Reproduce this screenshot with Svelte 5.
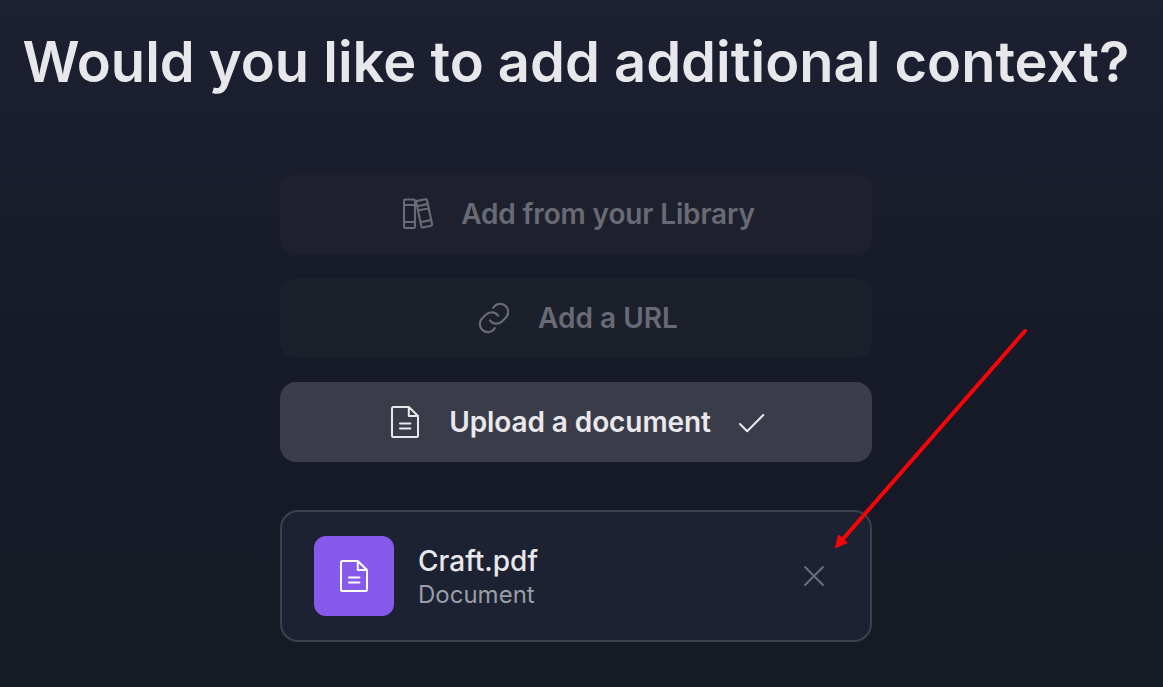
<script>
  const options = [
    { label: 'Add from your Library', icon: 'books', selected: false },
    { label: 'Add a URL', icon: 'link', selected: false },
    { label: 'Upload a document', icon: 'file', selected: true }
  ];
</script>

{#snippet fileIcon()}
  <svg class="icon" width="40" height="40" viewBox="0 0 40 40">
    <path d="M8.500 5h15.300l9.200 9v19.500a1.500 1.500 0 0 1-1.500 1.500h-23A1.500 1.500 0 0 1 7 33.500V6.500A1.500 1.500 0 0 1 8.500 5ZM23.800 5v9H33M15 21.400h10.400M15 26.400h10.400" />
  </svg>
{/snippet}

<main>
  <h1>Would you like to add additional context?</h1>
  <div class="options">
    {#each options as option}
      <button class={[option.icon, option.selected && 'selected']}>
        {#if option.icon === 'books'}
          <svg class="icon" width="40" height="40" viewBox="-1 0 40 40">
            <rect x="6" y="5.500" width="11" height="28.500" rx="1.300" />
            <path d="M6 11h11M6 28h11" />
            <path d="m19.300 6.900 8.200-1.700a1.300 1.300 0 0 1 1.500 1l5.100 24a1.300 1.300 0 0 1-1 1.500l-8.200 1.800a1.300 1.300 0 0 1-1.500-1l-5.100-24a1.300 1.300 0 0 1 1-1.600ZM19.200 12.200l10.900-2.300M20.100 16.500l10.900-2.300M22.500 28.200l10.900-2.300" />
          </svg>
        {:else if option.icon === 'link'}
          <svg class="icon" width="40" height="40" viewBox="0 0 40 40">
            <path d="M19.200 10A8 8 0 1 1 31.700 19.700L28.200 23.200A8 8 0 0 1 15.900 22.300M20.800 30A8 8 0 1 1 8.300 20.300L11.800 16.800A8 8 0 0 1 24.100 17.700" />
          </svg>
        {:else}
          {@render fileIcon()}
        {/if}
        <span>{option.label}</span>
        {#if option.selected}
          <svg class="check" width="32" height="32" viewBox="0 0 32 32"><path d="m5 18 7.200 7.300L28.300 9" /></svg>
        {/if}
      </button>
    {/each}
  </div>

  <section class="document">
    <div class="thumb">{@render fileIcon()}</div>
    <div class="details">
      <strong>Craft.pdf</strong>
      <span>Document</span>
    </div>
    <button class="remove" aria-label="Remove">
      <svg width="32" height="32" viewBox="0 0 32 32"><path d="m7 7 18 18M25 7 7 25" /></svg>
    </button>
  </section>

  <svg class="arrow" width="1163" height="687" viewBox="0 0 1163 687">
    <path d="M1025 331 843 539" />
    <polygon points="835.500,547.500 838.500,535 847,542.500" />
  </svg>
</main>

<style>
  :global(body) { margin: 0; overflow: hidden; }
  main {
    position: relative;
    box-sizing: border-box;
    width: 1163px;
    height: 687px;
    padding: 28px 11px 0 0;
    display: flex;
    flex-direction: column;
    align-items: center;
    overflow: hidden;
    font-family: Inter, sans-serif;
    color: #e8e8ec;
    background: linear-gradient(#1d2031 0%, #171a28 50%, #151a24 100%);
  }
  h1 { margin: 0; font-size: 56px; line-height: 68px; font-weight: 600; white-space: nowrap; }
  .options { width: 592px; margin-top: 78px; display: flex; flex-direction: column; gap: 24px; }
  .options button {
    height: 80px;
    padding: 0;
    border: 0;
    border-radius: 16px;
    display: flex;
    align-items: center;
    justify-content: center;
    gap: 24px;
    font: 600 28px/40px Inter, sans-serif;
    color: #686b76;
    background: #1e212d;
  }
  .options button.books { letter-spacing: -0.14px; }
  .options button.link { background: #1c202b; }
  .options button.selected { letter-spacing: -0.1px; color: #e9e9ed; background: #3b3c49; }
  svg { display: block; flex-shrink: 0; fill: none; stroke: currentColor; stroke-width: 2; stroke-linecap: round; stroke-linejoin: round; }
  .books svg, .link svg { stroke-width: 2.1; }
  .document {
    box-sizing: border-box;
    width: 592px;
    height: 132px;
    margin-top: 48px;
    padding: 0 40px 0 32px;
    border: 2px solid #3d404e;
    border-radius: 18px;
    display: flex;
    align-items: center;
    background: #1d2233;
  }
  .thumb {
    width: 80px;
    height: 80px;
    border-radius: 12px;
    display: grid;
    place-items: center;
    background: #885aec;
    color: #fff;
  }
  .details { flex: 1; margin-left: 24px; padding-top: 4px; display: flex; flex-direction: column; }
  .details strong { font-size: 28px; line-height: 33px; font-weight: 500; }
  .details span { font-size: 24px; line-height: 34px; color: #9a9ca7; }
  .remove { padding: 0; border: 0; background: none; color: #6a6d7c; }
  .arrow { position: absolute; top: 0; left: 0; color: #f50508; stroke-width: 4; pointer-events: none; }
  .arrow polygon { fill: currentColor; stroke-width: 1; }
</style>
